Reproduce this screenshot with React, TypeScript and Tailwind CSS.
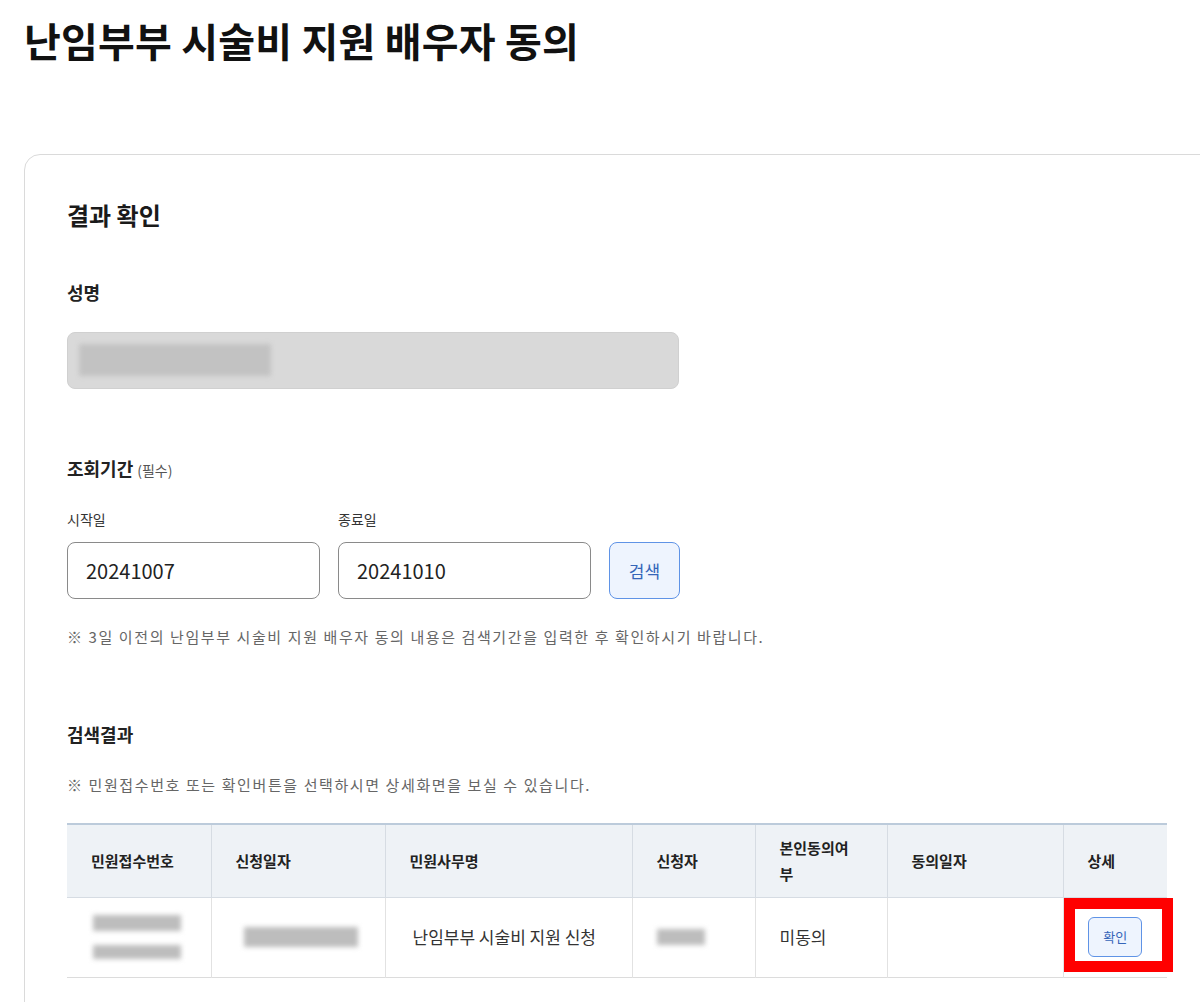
import React from 'react';

const headers = [
  { label: '민원접수번호', width: 'w-[144px]' },
  { label: '신청일자', width: 'w-[174px]' },
  { label: '민원사무명', width: 'w-[247px]' },
  { label: '신청자', width: 'w-[123px]' },
  { label: '본인동의여부', width: 'w-[132px]' },
  { label: '동의일자', width: 'w-[176px]' },
  { label: '상세', width: 'w-[104px]' },
];

function Blur({ className }: { className: string }) {
  return <div className={`bg-[#bdbdbd] blur-[2.5px] ${className}`}></div>;
}

export default function App() {
  return (
    <div className="w-[1200px] min-h-[1002px] bg-white overflow-hidden font-['Noto_Sans_CJK_KR','Noto_Sans',sans-serif] text-[#222]">
      <h1 className="pl-6 pt-4 text-[40px] leading-[48px] font-bold tracking-[0.2px] text-[#111]">
        난임부부 시술비 지원 배우자 동의
      </h1>

      <div className="ml-6 mt-[90px] w-[1240px] border border-[#dadada] rounded-[16px] pl-[42px] pt-[44px] pb-10">
        <h2 className="text-[24px] leading-[32px] font-bold text-[#1a1a1a]">결과 확인</h2>

        {/* 성명 */}
        <div className="mt-[49px] text-[18px] leading-[24px] font-bold">성명</div>
        <div className="mt-[28px] w-[612px] h-[57px] bg-[#d9d9d9] border border-[#d0d0d0] rounded-[8px] pl-[11px] pt-[11px]">
          <Blur className="w-[192px] h-[32px] opacity-80" />
        </div>

        {/* 조회기간 */}
        <div className="mt-[67px] leading-[24px]">
          <span className="text-[18px] font-bold">조회기간</span>
          <span className="ml-1 text-[14px] text-[#555]">(필수)</span>
        </div>
        <div className="mt-[27px] flex items-end gap-[18px]">
          <div className="flex flex-col">
            <label className="text-[14px] leading-[20px] text-[#333]">시작일</label>
            <input
              type="text"
              defaultValue="20241007"
              className="mt-[13px] w-[253px] h-[57px] border border-[#8a8a8a] rounded-[8px] px-[18px] text-[20px] text-[#222] outline-none"
            />
          </div>
          <div className="flex flex-col">
            <label className="text-[14px] leading-[20px] text-[#333]">종료일</label>
            <input
              type="text"
              defaultValue="20241010"
              className="mt-[13px] w-[253px] h-[57px] border border-[#8a8a8a] rounded-[8px] px-[18px] text-[20px] text-[#222] outline-none"
            />
          </div>
          <button className="w-[71px] h-[57px] bg-[#eef4fe] border border-[#5f93e6] rounded-[8px] text-[17px] text-[#3565b9] cursor-pointer">
            검색
          </button>
        </div>
        <p className="mt-[27px] text-[15px] leading-[22px] tracking-[1.6px] text-[#666]">
          ※ 3일 이전의 난임부부 시술비 지원 배우자 동의 내용은 검색기간을 입력한 후 확인하시기 바랍니다.
        </p>

        {/* 검색결과 */}
        <div className="mt-[74px] text-[18px] leading-[24px] font-bold">검색결과</div>
        <p className="mt-[28px] text-[15px] leading-[22px] tracking-[1.6px] text-[#666]">
          ※ 민원접수번호 또는 확인버튼을 선택하시면 상세화면을 보실 수 있습니다.
        </p>

        <table className="mt-[27px] w-[1100px] table-fixed border-collapse">
          <thead>
            <tr className="h-[73px] bg-[#eef2f6] border-t-2 border-[#bccbdb]">
              {headers.map((h, i) => (
                <th
                  key={h.label}
                  className={`${h.width} pl-6 pr-2 text-left align-middle text-[15px] leading-[26px] font-bold text-[#222] ${
                    i < headers.length - 1 ? 'border-r border-[#d6dce3]' : ''
                  }`}
                >
                  {h.label === '본인동의여부' ? (
                    <span className="block w-[80px]">{h.label}</span>
                  ) : (
                    h.label
                  )}
                </th>
              ))}
            </tr>
          </thead>
          <tbody>
            <tr className="h-[80px] border-b border-[#dcdcdc] border-t border-t-[#d6dce3] text-[17px] text-[#333]">
              <td className="border-r border-[#e2e2e2] pl-[26px]">
                <div className="flex flex-col gap-[14px]">
                  <Blur className="w-[88px] h-[16px]" />
                  <Blur className="w-[88px] h-[14px]" />
                </div>
              </td>
              <td className="border-r border-[#e2e2e2] pl-[32px]">
                <Blur className="w-[114px] h-[20px]" />
              </td>
              <td className="border-r border-[#e2e2e2] pl-[27px]">난임부부 시술비 지원 신청</td>
              <td className="border-r border-[#e2e2e2] pl-[24px]">
                <Blur className="w-[48px] h-[16px]" />
              </td>
              <td className="border-r border-[#e2e2e2] pl-[24px]">미동의</td>
              <td className="border-r border-[#e2e2e2]"></td>
              <td className="relative text-center">
                <button className="relative z-10 w-[54px] h-[40px] bg-[#eef4fe] border border-[#5f93e6] rounded-[6px] text-[13px] text-[#3565b9] cursor-pointer">
                  확인
                </button>
                <div className="absolute left-0 top-0 w-[109px] h-[74px] border-[11px] border-[#ff0000] pointer-events-none"></div>
              </td>
            </tr>
          </tbody>
        </table>
      </div>
    </div>
  );
}
